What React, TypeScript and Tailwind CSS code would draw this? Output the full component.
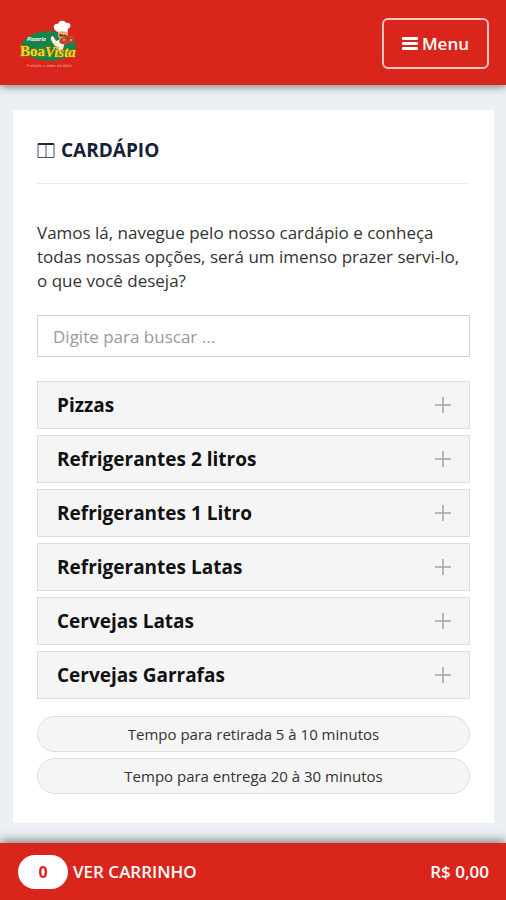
import { useState } from "react";

const categories = [
    { id: 1, name: "Pizzas" },
    { id: 2, name: "Refrigerantes 2 litros" },
    { id: 3, name: "Refrigerantes 1 Litro" },
    { id: 4, name: "Refrigerantes Latas" },
    { id: 5, name: "Cervejas Latas" },
    { id: 6, name: "Cervejas Garrafas" },
];

const deliveryTimes = [
    "Tempo para retirada 5 à 10 minutos",
    "Tempo para entrega 20 à 30 minutos",
];

function Logo() {
    return (
        <svg className="h-[50px] w-[60px]" viewBox="0 0 60 50" role="img" aria-label="Pizzaria Boa Vista">
            <ellipse cx="30" cy="27" rx="27" ry="15" fill="#16834a" />
            {/* chef */}
            <path d="M36 27c-2-3-5-6-4-9l2-1 3 5 5-2 4 3-2 7-4 3z" fill="#fff3e4" />
            <path d="M39 11h10v5c-1 4-3 5-5 5s-5-2-5-5z" fill="#eaa878" />
            <path d="M40 16c2-2 3 0 4 0s3-1 4 1c-2 1-3 1-4 0-1 1-3 1-4-1z" fill="#60301c" />
            <path d="M37 12c-4-3-2-8 2-7 1-4 7-4 8-1 5-1 6 4 2 6l-1 3c-3-1-7-1-9 0z" fill="#fff" />
            {/* pizza */}
            <ellipse cx="48" cy="21" rx="8" ry="4" fill="#c6462b" transform="rotate(-12 48 21)" />
            <circle cx="45" cy="21" r="1" fill="#f1b04e" />
            <circle cx="49" cy="19" r="1" fill="#6d3b1d" />
            <circle cx="52" cy="21" r="1" fill="#f1b04e" />
            <text x="8" y="22" fontFamily="Open Sans, sans-serif" fontSize="5" fontWeight="700" fontStyle="italic" fill="#fff">Pizzaria</text>
            <text x="1" y="37" fontFamily="Liberation Serif, serif" fontSize="15" fontWeight="700" fill="#ffd21c" stroke="#8a7a14" strokeWidth="1" paintOrder="stroke">
                Boa<tspan fontStyle="italic" dy="1">Vista</tspan>
            </text>
            <text x="30" y="48" textAnchor="middle" fontFamily="Open Sans, sans-serif" fontSize="4" fontStyle="italic" fill="#f9b3a9">Tradição e sabor da Itália</text>
        </svg>
    )
}

function MenuIcon() {
    return (
        <svg className="h-[13px] w-4" viewBox="0 0 16 13" aria-hidden="true">
            <rect width="16" height="3" rx="1" fill="currentColor" />
            <rect y="5" width="16" height="3" rx="1" fill="currentColor" />
            <rect y="10" width="16" height="3" rx="1" fill="currentColor" />
        </svg>
    )
}

function ColumnsIcon() {
    return (
        <svg className="h-[17px] w-[18px]" viewBox="0 0 18 17" fill="none" aria-hidden="true">
            <path d="M1 2h16v13.500H1zM9 2v13.500" stroke="#4b525c" />
            <path d="M1 2h16" stroke="#1c2b45" strokeWidth="2" />
        </svg>
    )
}

function PlusIcon() {
    return (
        <svg className="size-4" viewBox="0 0 16 16" aria-hidden="true">
            <path d="M8 0v16M0 8h16" stroke="#a3a3a3" strokeWidth="1.500" />
        </svg>
    )
}

export default function App() {
    const [search, setSearch] = useState("");

    return (
        <div className="flex min-h-screen flex-col bg-[#ecf0f4] font-['Open_Sans',sans-serif]">
            <header className="sticky top-0 z-10 flex items-center justify-between bg-[#da251c] pt-[18px] pr-[17px] pb-4 pl-[19px] shadow-[0_2px_8px_rgba(0,0,0,0.45)]">
                <a href="#"><Logo /></a>
                <button type="button" className="flex items-center gap-1 rounded-md border-2 border-[#f8c4bf] px-[18px] py-3 text-[17px] leading-[23px] font-semibold text-white">
                    <MenuIcon />
                    Menu
                </button>
            </header>

            <main className="grow pt-[25px] pr-3 pb-5 pl-[13px]">
                <section className="bg-white px-6 pt-[26px] pb-[29px]">
                    <h1 className="flex items-center gap-[6px] border-b border-[#ececec] pb-[18px] text-[19px] leading-[29px] font-bold text-[#142038]">
                        <ColumnsIcon />
                        CARDÁPIO
                    </h1>
                    <p className="mt-[37px] text-[17px] leading-6 text-[#333333]">
                        Vamos lá, navegue pelo nosso cardápio e conheça todas nossas opções, será um imenso prazer servi-lo, o que você deseja?
                    </p>
                    <input
                        type="text"
                        aria-label="Buscar no cardápio"
                        placeholder="Digite para buscar ..."
                        value={search}
                        onChange={(e) => setSearch(e.target.value)}
                        className="mt-[22px] block h-[42px] w-full border border-[#ced3d8] px-[15px] text-[17px] text-[#333333] placeholder:text-[#999999]"
                    />
                    <div className="mt-6 flex flex-col gap-[6px]">
                        {categories.map((category) => (
                            <button key={category.id} type="button" className="flex h-12 items-center justify-between border border-[#dddddd] bg-[#f5f5f5] pr-[18px] pl-[19px] text-left text-[19px] font-bold text-[#111111]">
                                {category.name}
                                <PlusIcon />
                            </button>
                        ))}
                    </div>
                    <div className="mt-[17px] flex flex-col gap-[6px]">
                        {deliveryTimes.map((time) => (
                            <p key={time} className="rounded-full border border-[#dddddd] bg-[#f5f5f5] py-[6px] text-center text-[15px] leading-[22px] text-[#333333]">
                                {time}
                            </p>
                        ))}
                    </div>
                </section>
            </main>

            <footer className="sticky bottom-0 z-10 bg-[#da251c] shadow-[0_-2px_10px_rgba(0,0,0,0.5)]">
                <button type="button" className="flex h-[57px] w-full items-center pr-[17px] pl-[18px] text-[17px] font-semibold text-white">
                    <span className="mr-[5px] w-[50px] rounded-full bg-white py-[5px] text-center text-base leading-6 font-bold text-[#da251c]">0</span>
                    <span>VER CARRINHO</span>
                    <span className="ml-auto">R$ 0,00</span>
                </button>
            </footer>
        </div>
    )
}
